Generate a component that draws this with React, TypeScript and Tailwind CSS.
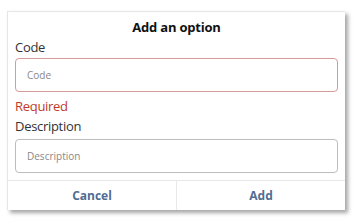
import React from 'react';

const App: React.FC = () => {
    return (
        <div className="w-[357px] h-[223px] bg-white pt-[11px] pl-[7px]" style={{ fontFamily: '"Open Sans", "Noto Sans", sans-serif' }}>
            <div className="w-[338px] h-[199px] bg-white flex flex-col border-t border-l border-[#e6e6e6] shadow-[3px_3px_4px_rgba(0,0,0,0.35)]">
                <h3 className="text-center font-bold text-[13px] leading-[18px] text-[#111] mt-[6px] tracking-[-0.2px]">Add an option</h3>
                <div className="px-[7px] flex flex-col">
                    <label className="text-[13px] leading-[18px] text-[#333] mt-[2px] tracking-[-0.3px]">Code</label>
                    <div className="mt-[2px] h-[34px] rounded-[4px] border border-[#d59a9a] flex items-center px-[11px]">
                        <span className="text-[10px] text-[#888]">Code</span>
                    </div>
                    <span className="text-[13px] leading-[18px] text-[#c0392b] mt-[5px] tracking-[-0.3px]">Required</span>
                    <label className="text-[13px] leading-[18px] text-[#333] mt-[2px] tracking-[-0.3px]">Description</label>
                    <div className="mt-[4px] h-[34px] rounded-[4px] border border-[#bdbdbd] flex items-center px-[11px]">
                        <span className="text-[10px] text-[#888]">Description</span>
                    </div>
                </div>
                <div className="mt-auto h-[30px] border-t border-[#e8e8e8] flex">
                    <button className="flex-1 font-bold text-[12px] text-[#4f6d94] border-r border-[#e8e8e8]">Cancel</button>
                    <button className="flex-1 font-bold text-[12px] text-[#4f6d94]">Add</button>
                </div>
            </div>
        </div>
    );
};

export default App;
